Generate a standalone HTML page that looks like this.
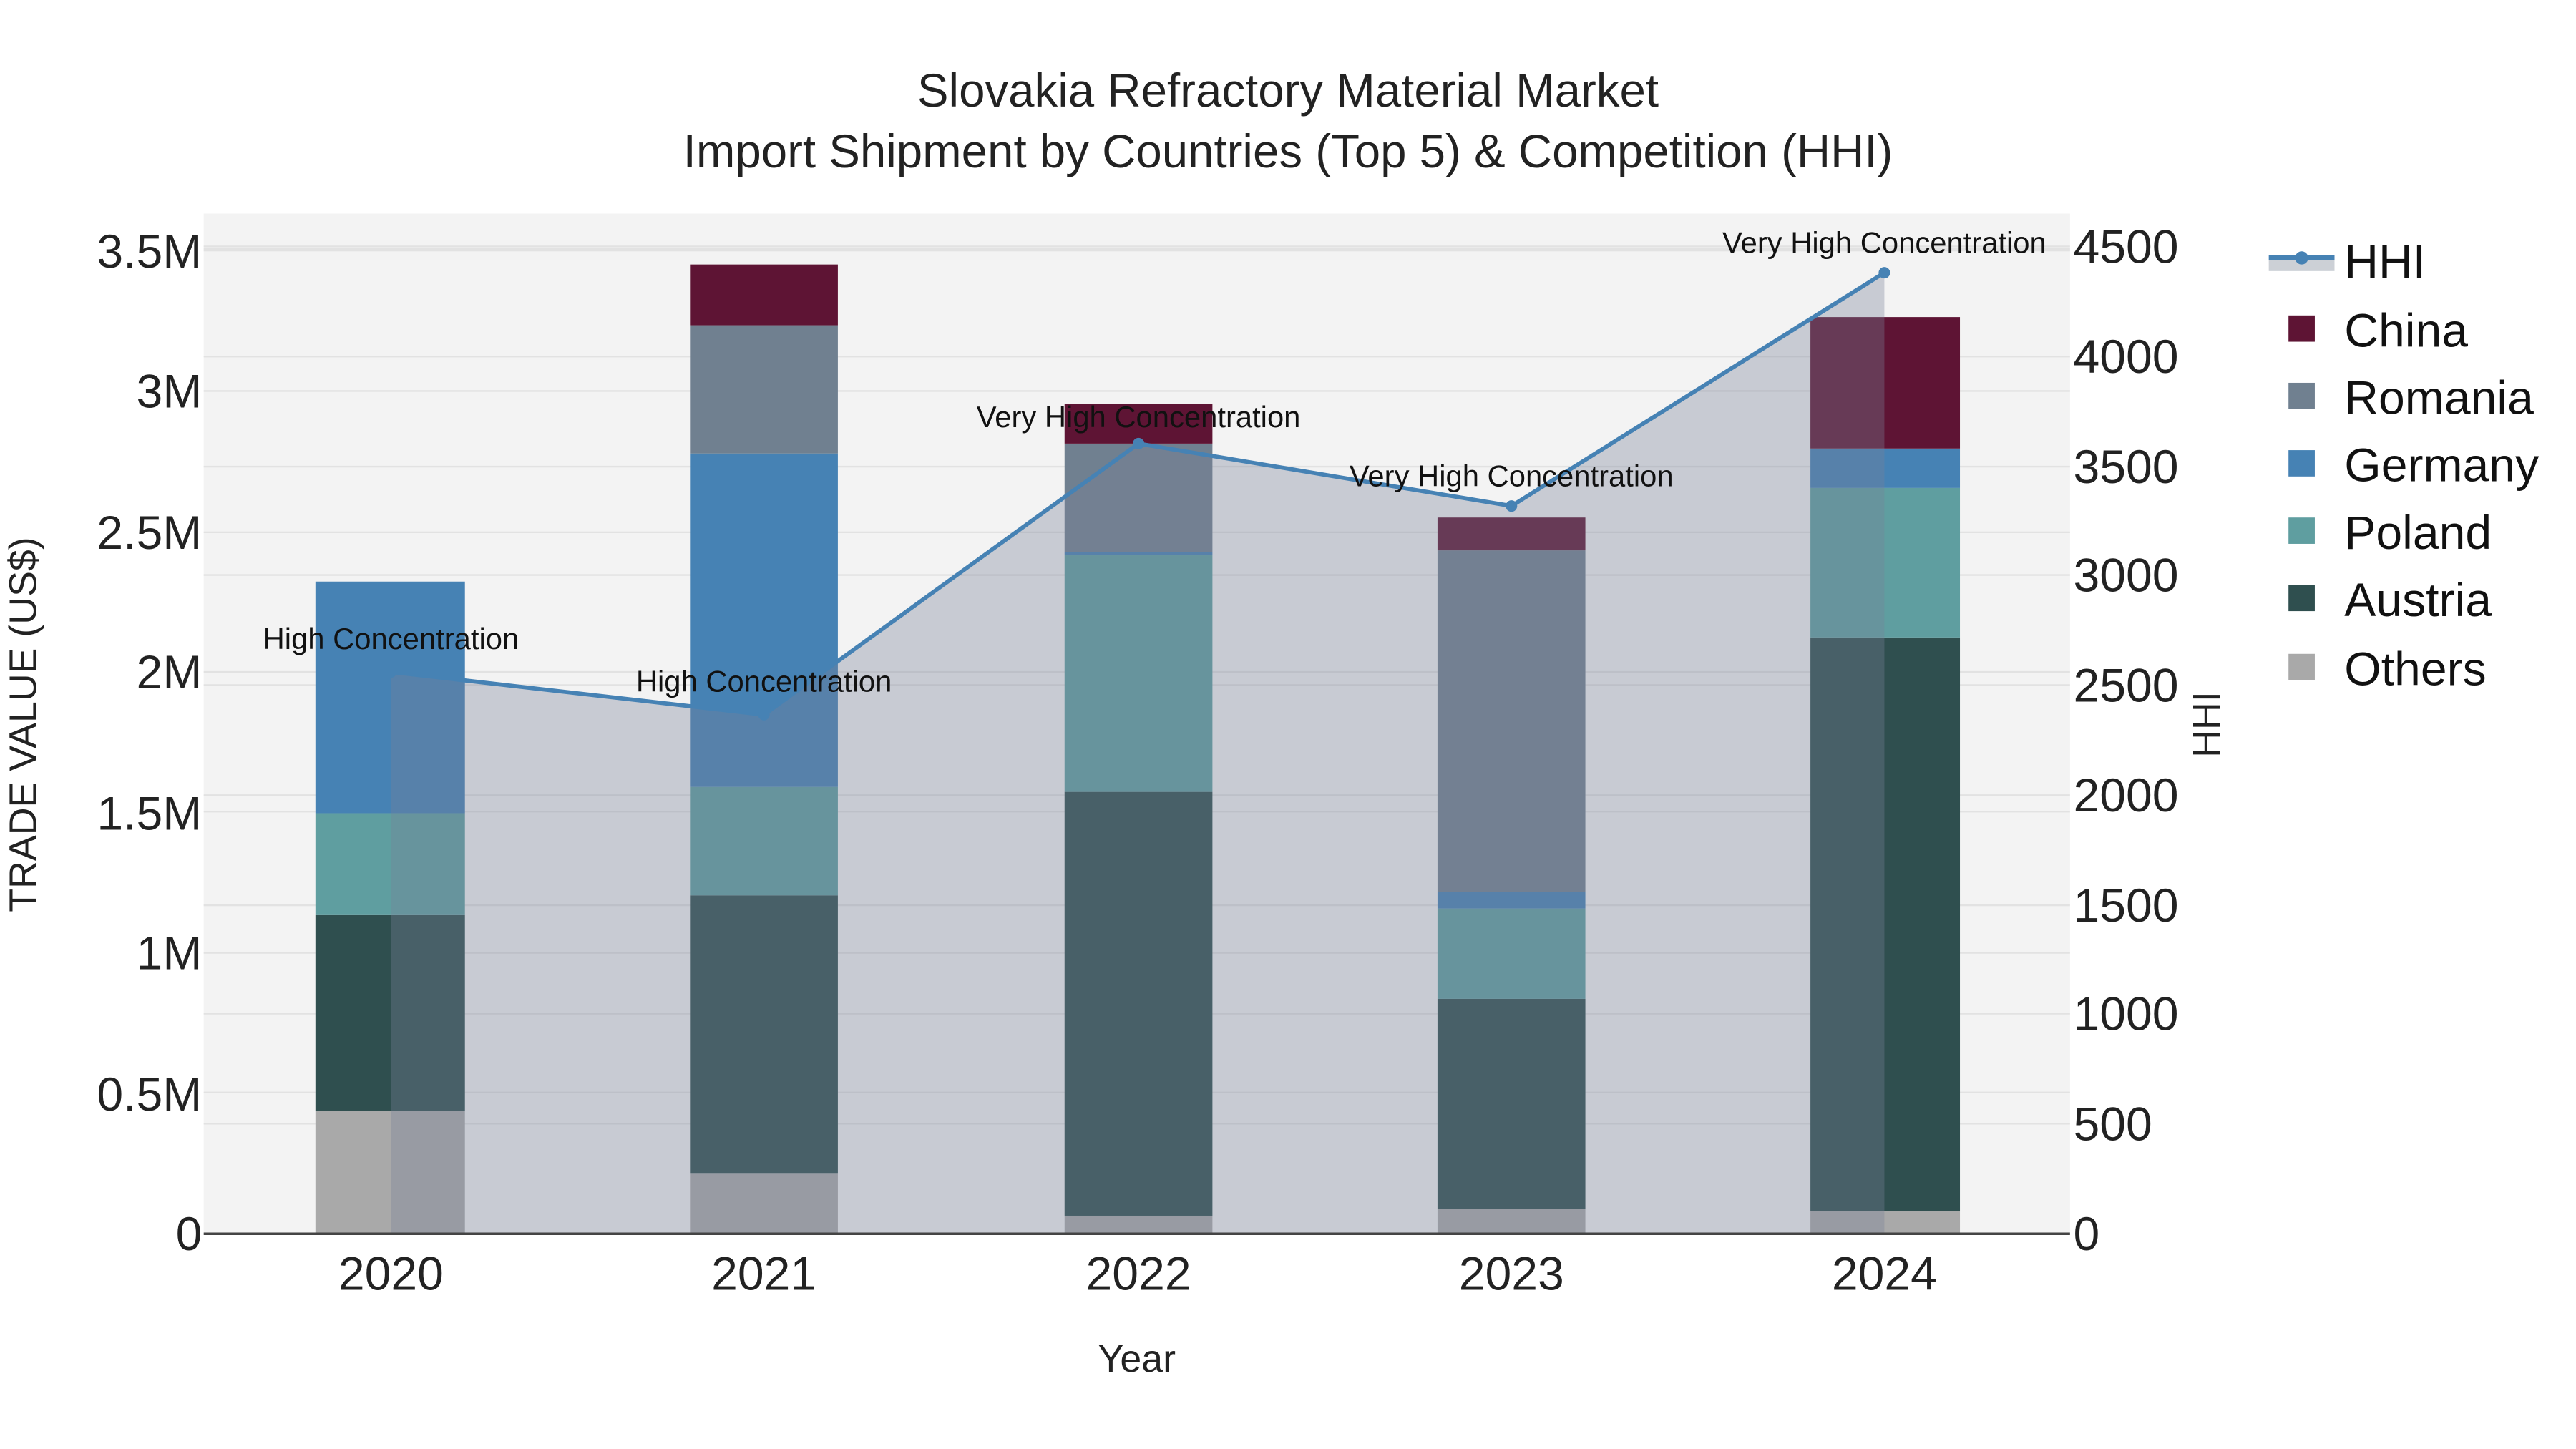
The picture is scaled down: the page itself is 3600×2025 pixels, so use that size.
<!DOCTYPE html>
<html><head><style>html,body{margin:0;padding:0;background:#fff}svg{display:block}text{font-family:"Liberation Sans",sans-serif}</style></head><body>
<svg width="3600" height="2025" viewBox="0 0 1568 882" xmlns="http://www.w3.org/2000/svg">
<rect width="1568" height="882" fill="#fff"/>
<rect x="124" y="130" width="1136" height="621" fill="#f3f3f3"/>
<g stroke="#e2e2e2" stroke-width="1">
<line x1="124" x2="1260" y1="665" y2="665"/><line x1="124" x2="1260" y1="580" y2="580"/><line x1="124" x2="1260" y1="494" y2="494"/><line x1="124" x2="1260" y1="409" y2="409"/><line x1="124" x2="1260" y1="324" y2="324"/><line x1="124" x2="1260" y1="238" y2="238"/><line x1="124" x2="1260" y1="152" y2="152" stroke-width="2"/>
<line x1="124" x2="1260" y1="684" y2="684"/><line x1="124" x2="1260" y1="617" y2="617"/><line x1="124" x2="1260" y1="551" y2="551"/><line x1="124" x2="1260" y1="484" y2="484"/><line x1="124" x2="1260" y1="417" y2="417"/><line x1="124" x2="1260" y1="350" y2="350"/><line x1="124" x2="1260" y1="284" y2="284"/><line x1="124" x2="1260" y1="217" y2="217"/><line x1="124" x2="1260" y1="150" y2="150"/>
</g>
<g>
<rect x="192" y="676" width="91" height="75" fill="#a9a9a9"/><rect x="192" y="557" width="91" height="119" fill="#2f4f4f"/><rect x="192" y="495" width="91" height="62" fill="#5f9ea0"/><rect x="192" y="354" width="91" height="141" fill="#4682b4"/>
<rect x="420" y="714" width="90" height="37" fill="#a9a9a9"/><rect x="420" y="545" width="90" height="169" fill="#2f4f4f"/><rect x="420" y="479" width="90" height="66" fill="#5f9ea0"/><rect x="420" y="276" width="90" height="203" fill="#4682b4"/><rect x="420" y="198" width="90" height="78" fill="#708090"/><rect x="420" y="161" width="90" height="37" fill="#5e1434"/>
<rect x="648" y="740" width="90" height="11" fill="#a9a9a9"/><rect x="648" y="482" width="90" height="258" fill="#2f4f4f"/><rect x="648" y="338" width="90" height="144" fill="#5f9ea0"/><rect x="648" y="336" width="90" height="2" fill="#4682b4"/><rect x="648" y="270" width="90" height="66" fill="#708090"/><rect x="648" y="246" width="90" height="24" fill="#5e1434"/>
<rect x="875" y="736" width="90" height="15" fill="#a9a9a9"/><rect x="875" y="608" width="90" height="128" fill="#2f4f4f"/><rect x="875" y="553" width="90" height="55" fill="#5f9ea0"/><rect x="875" y="543" width="90" height="10" fill="#4682b4"/><rect x="875" y="335" width="90" height="208" fill="#708090"/><rect x="875" y="315" width="90" height="20" fill="#5e1434"/>
<rect x="1102" y="737" width="91" height="14" fill="#a9a9a9"/><rect x="1102" y="388" width="91" height="349" fill="#2f4f4f"/><rect x="1102" y="297" width="91" height="91" fill="#5f9ea0"/><rect x="1102" y="273" width="91" height="24" fill="#4682b4"/><rect x="1102" y="193" width="91" height="80" fill="#5e1434"/>
</g>
<polygon points="238,409 465,435 693,270 920,308 1147,166 1147,751 238,751" fill="rgba(119,130,151,0.35)"/>
<polyline points="238,409 465,435 693,270 920,308 1147,166" fill="none" stroke="#4682b4" stroke-width="2.5"/>
<g fill="#4682b4"><circle cx="238" cy="409" r="3.5"/><circle cx="465" cy="435" r="3.5"/><circle cx="693" cy="270" r="3.5"/><circle cx="920" cy="308" r="3.5"/><circle cx="1147" cy="166" r="3.5"/></g>
<line x1="124" x2="1260" y1="751" y2="751" stroke="#444" stroke-width="1.5"/>
<g font-size="18.2" fill="#111" text-anchor="middle">
<text x="238" y="395">High Concentration</text><text x="465" y="421">High Concentration</text><text x="693" y="260">Very High Concentration</text><text x="920" y="296">Very High Concentration</text><text x="1147" y="154">Very High Concentration</text>
</g>
<g font-size="28.5" fill="#222" text-anchor="middle">
<text x="784" y="65">Slovakia Refractory Material Market</text>
<text x="784" y="102">Import Shipment by Countries (Top 5) &amp; Competition (HHI)</text>
</g>
<g font-size="28.8" fill="#222" text-anchor="end">
<text x="123" y="761">0</text><text x="123" y="676">0.5M</text><text x="123" y="590">1M</text><text x="123" y="505">1.5M</text><text x="123" y="419">2M</text><text x="123" y="334">2.5M</text><text x="123" y="248">3M</text><text x="123" y="163">3.5M</text>
</g>
<g font-size="28.8" fill="#222" text-anchor="start">
<text x="1262" y="761">0</text><text x="1262" y="694">500</text><text x="1262" y="627">1000</text><text x="1262" y="561">1500</text><text x="1262" y="494">2000</text><text x="1262" y="427">2500</text><text x="1262" y="360">3000</text><text x="1262" y="294">3500</text><text x="1262" y="227">4000</text><text x="1262" y="160">4500</text>
</g>
<g font-size="28.8" fill="#222" text-anchor="middle">
<text x="238" y="785">2020</text><text x="465" y="785">2021</text><text x="693" y="785">2022</text><text x="920" y="785">2023</text><text x="1147" y="785">2024</text>
</g>
<text x="692" y="835" font-size="23.4" fill="#222" text-anchor="middle">Year</text>
<text transform="translate(22,441) rotate(-90)" font-size="23.4" fill="#222" text-anchor="middle">TRADE VALUE (US$)</text>
<text transform="translate(1351,441) rotate(-90)" font-size="23.4" fill="#222" text-anchor="middle">HHI</text>
<rect x="1381" y="158" width="40" height="7" fill="#ccd0d6"/>
<line x1="1381" x2="1421" y1="157" y2="157" stroke="#4682b4" stroke-width="3"/><circle cx="1401" cy="157" r="4" fill="#4682b4"/>
<g font-size="28.8" fill="#111">
<text x="1427" y="169">HHI</text><text x="1427" y="211">China</text><text x="1427" y="252">Romania</text><text x="1427" y="293">Germany</text><text x="1427" y="334">Poland</text><text x="1427" y="375">Austria</text><text x="1427" y="417">Others</text>
</g>
<rect x="1393" y="192" width="16" height="16" fill="#5e1434"/>
<rect x="1393" y="233" width="16" height="16" fill="#708090"/>
<rect x="1393" y="274" width="16" height="16" fill="#4682b4"/>
<rect x="1393" y="315" width="16" height="16" fill="#5f9ea0"/>
<rect x="1393" y="356" width="16" height="16" fill="#2f4f4f"/>
<rect x="1393" y="398" width="16" height="16" fill="#a9a9a9"/>
</svg>
</body></html>
